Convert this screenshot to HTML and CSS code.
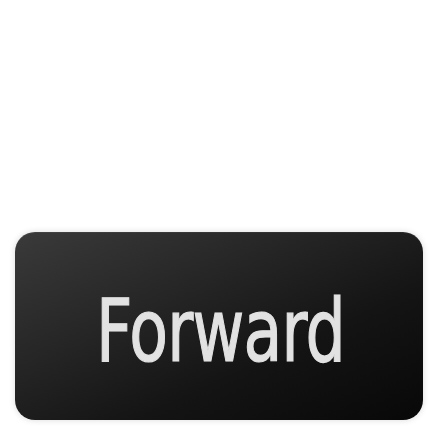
FILE: index.html
```html
<!DOCTYPE html>
<html>
<head>
<meta charset="utf-8">
<link rel="stylesheet" href="styles.css">
</head>
<body>
<div class="page">
  <button class="forward-btn"><span class="label">Forward</span></button>
</div>
</body>
</html>
```

FILE: styles.css
```css
html, body {
  margin: 0;
  padding: 0;
  background: #ffffff;
}
.page {
  width: 440px;
  height: 440px;
  box-sizing: border-box;
  padding: 232px 17px 20px 15px;
  display: flex;
}
.forward-btn {
  flex: 1;
  height: 188px;
  border: none;
  border-radius: 20px;
  background: linear-gradient(155deg, #3a3a3a 0%, #262626 35%, #141414 65%, #080808 100%);
  box-shadow: 0 0 6px rgba(0,0,0,0.15), inset 0 1px 1px rgba(255,255,255,0.06);
  display: flex;
  align-items: center;
  justify-content: center;
  padding: 10px 0 0 2px;
  cursor: pointer;
}
.label {
  font-family: "DejaVu Sans Condensed", "DejaVu Sans", sans-serif;
  font-stretch: condensed;
  font-size: 88px;
  color: #e2e2e2;
  -webkit-text-stroke: 1.2px #e2e2e2;
  letter-spacing: -1px;
  line-height: 1;
  display: inline-block;
  transform: scaleX(0.8);
}
```
